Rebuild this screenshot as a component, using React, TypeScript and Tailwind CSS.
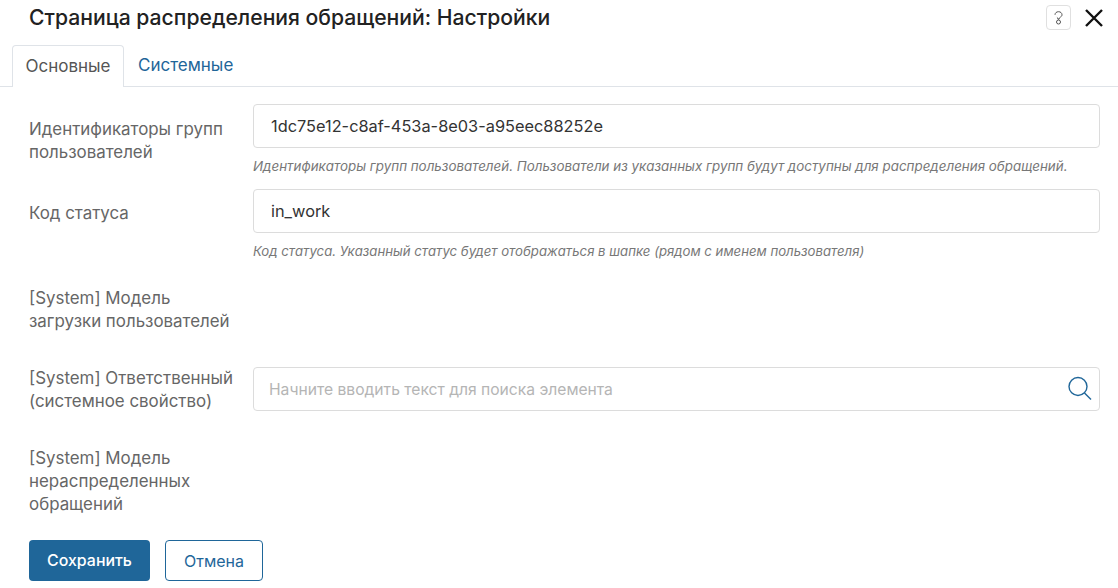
import React from "react";

function Row({ label, children, className, labelClass }: { label: React.ReactNode; children?: React.ReactNode; className?: string; labelClass?: string }) {
  return (
    <div className={"flex " + (className ?? "")}>
      <div className={"w-[224px] shrink-0 pr-2 text-[16.9px] leading-[23px] text-[#666666] " + (labelClass ?? "pt-[14px]")}>{label}</div>
      <div className="flex-1 min-w-0">{children}</div>
    </div>
  );
}

function Hint({ children, className }: { children: React.ReactNode; className: string }) {
  return <div className={"mt-[9px] leading-[18px] italic text-[#777777] " + className}>{children}</div>;
}

export default function App() {
  return (
    <div className="w-[1118px] h-[588px] overflow-hidden bg-white font-['Inter',sans-serif]">
      <div className="flex items-center justify-between h-[45px] pl-[29px] pr-[14px] pb-[10px]">
        <div className="text-[21.15px] leading-[28px] font-medium text-[#222222]">Страница распределения обращений: Настройки</div>
        <div className="flex items-center gap-[13px]">
          <div className="w-[25px] h-[25px] border border-[#e0e0e0] rounded-[4px] flex items-center justify-center">
            <svg width="9" height="14" viewBox="0 0 9 14" fill="none" stroke="#555" strokeWidth="1">
              <path d="M1 3.8C1 2 2.5.7 4.5.7S8 2 8 3.8c0 1.2-.8 1.8-1.7 2.4-.8.5-1.3 1-1.3 2H4c0-1-.4-1.4-1.1-1.9" />
              <circle cx="4.5" cy="11" r="2" />
            </svg>
          </div>
          <svg width="20" height="20" viewBox="0 0 20 20" fill="none" stroke="#111" strokeWidth="2.4">
            <path d="M2 2l16 16M18 2L2 18" />
          </svg>
        </div>
      </div>

      <div className="flex h-[42px] border-b border-[#dfe3e8] pl-[12px]">
        <div className="h-[42px] w-[112px] border border-b-0 border-[#dfe3e8] rounded-t-[4px] bg-white flex items-center justify-center text-[17px] text-[#555555]">Основные</div>
        <div className="h-[41px] flex items-center pl-[14px] text-[17px] text-[#1f6699]">Системные</div>
      </div>

      <div className="pl-[29px] pr-[18px] pt-[17px]">
        <Row label={<>Идентификаторы групп<br />пользователей</>}>
          <div className="h-[44px] border border-[#dcdcdc] rounded-[4px] flex items-center pl-[17px] text-[16.35px] text-[#333333]">1dc75e12-c8af-453a-8e03-a95eec88252e</div>
          <Hint className="text-[13.37px]">Идентификаторы групп пользователей. Пользователи из указанных групп будут доступны для распределения обращений.</Hint>
        </Row>
        <Row label="Код статуса" className="mt-[14px]" labelClass="pt-[13px]">
          <div className="h-[44px] border border-[#dcdcdc] rounded-[4px] flex items-center pl-[17px] text-[16.35px] text-[#333333]">in_work</div>
          <Hint className="text-[13.2px]">Код статуса. Указанный статус будет отображаться в шапке (рядом с именем пользователя)</Hint>
        </Row>
        <Row label={<>[System] Модель<br />загрузки пользователей</>} className="mt-[13px]" />
        <Row label={<>[System] Ответственный<br />(системное свойство)</>} className="mt-[34px]" labelClass="pt-0">
          <div className="h-[44px] border border-[#dcdcdc] rounded-[4px] flex items-center justify-between pl-[15px] pr-[6px] text-[15.65px] text-[#b5b5b5]">
            <span className="pt-[1px]">Начните вводить текст для поиска элемента</span>
            <svg width="26" height="26" viewBox="0 0 26 26" fill="none" stroke="#1f6699" strokeWidth="1.4">
              <circle cx="11" cy="10.5" r="9" />
              <path d="M17.5 17l6.5 6.5" />
            </svg>
          </div>
        </Row>
        <Row label={<>[System] Модель<br />нераспределенных<br />обращений</>} className="mt-[20px]" />
        <div className="flex gap-[15px] mt-[24px]">
          <button className="w-[121px] h-[41px] rounded-[4px] bg-[#1f6699] text-white text-[15.9px] font-medium">Сохранить</button>
          <button className="w-[98px] h-[41px] rounded-[4px] border border-[#1f6699] bg-white text-[#1f6699] text-[16px]">Отмена</button>
        </div>
      </div>
    </div>
  );
}
